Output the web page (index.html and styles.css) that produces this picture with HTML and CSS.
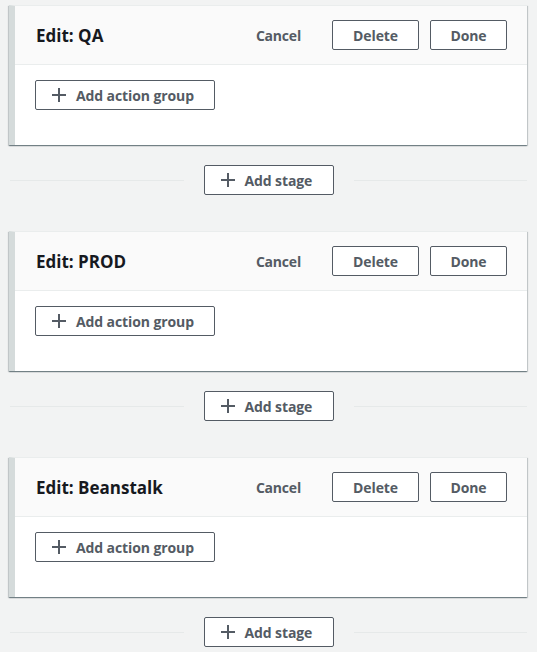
FILE: index.html
```html
<!DOCTYPE html>
<html>
<head>
<meta charset="utf-8">
<link rel="stylesheet" href="styles.css">
</head>
<body>
<div class="pipeline">
  <section class="stage">
    <header class="stage-head">
      <h2 class="stage-title">Edit: QA</h2>
      <div class="actions">
        <button class="link-btn">Cancel</button>
        <button class="btn btn-delete">Delete</button>
        <button class="btn btn-done">Done</button>
      </div>
    </header>
    <div class="stage-body">
      <button class="btn btn-icon btn-group"><svg class="plus" viewBox="0 0 14 14"><path d="M7 0v14M0 7h14"/></svg>Add action group</button>
    </div>
  </section>
  <div class="divider">
    <span class="line"></span>
    <button class="btn btn-icon btn-stage"><svg class="plus" viewBox="0 0 14 14"><path d="M7 0v14M0 7h14"/></svg>Add stage</button>
    <span class="line"></span>
  </div>

  <section class="stage">
    <header class="stage-head">
      <h2 class="stage-title">Edit: PROD</h2>
      <div class="actions">
        <button class="link-btn">Cancel</button>
        <button class="btn btn-delete">Delete</button>
        <button class="btn btn-done">Done</button>
      </div>
    </header>
    <div class="stage-body">
      <button class="btn btn-icon btn-group"><svg class="plus" viewBox="0 0 14 14"><path d="M7 0v14M0 7h14"/></svg>Add action group</button>
    </div>
  </section>
  <div class="divider">
    <span class="line"></span>
    <button class="btn btn-icon btn-stage"><svg class="plus" viewBox="0 0 14 14"><path d="M7 0v14M0 7h14"/></svg>Add stage</button>
    <span class="line"></span>
  </div>

  <section class="stage">
    <header class="stage-head">
      <h2 class="stage-title">Edit: Beanstalk</h2>
      <div class="actions">
        <button class="link-btn">Cancel</button>
        <button class="btn btn-delete">Delete</button>
        <button class="btn btn-done">Done</button>
      </div>
    </header>
    <div class="stage-body">
      <button class="btn btn-icon btn-group"><svg class="plus" viewBox="0 0 14 14"><path d="M7 0v14M0 7h14"/></svg>Add action group</button>
    </div>
  </section>
  <div class="divider">
    <span class="line"></span>
    <button class="btn btn-icon btn-stage"><svg class="plus" viewBox="0 0 14 14"><path d="M7 0v14M0 7h14"/></svg>Add stage</button>
    <span class="line"></span>
  </div>
</div>
</body>
</html>
```
FILE: styles.css
```css
html, body {
  margin: 0;
  padding: 0;
  background: #f2f3f3;
  font-family: "Open Sans", "Noto Sans", Arial, sans-serif;
  color: #16191f;
}

.pipeline {
  padding: 5px 10px 0 9px;
}

.stage {
  width: 518px;
  box-sizing: border-box;
  background: #fff;
  border-left: 6px solid #d5dbdb;
  border-top: 1px solid #eaeded;
  box-shadow: 0 1px 1px 0 rgba(0, 28, 36, 0.35), 1px 1px 1px 0 rgba(0, 28, 36, 0.15), -1px 1px 1px 0 rgba(0, 28, 36, 0.15);
}

.stage-head {
  height: 59px;
  box-sizing: border-box;
  display: flex;
  align-items: center;
  justify-content: space-between;
  background: #fafafa;
  border-bottom: 1px solid #eaeded;
  padding: 0 20px 0 21px;
}

.stage-title {
  margin: 0;
  font-size: 17px;
  font-weight: 700;
  color: #16191f;
  letter-spacing: 0;
}

.actions {
  display: flex;
  align-items: center;
}

.link-btn {
  border: none;
  background: none;
  font-family: inherit;
  font-size: 14px;
  font-weight: 700;
  color: #545b64;
  padding: 0;
  margin-right: 31px;
  letter-spacing: -0.2px;
}

.btn {
  box-sizing: border-box;
  height: 30px;
  border: 1px solid #545b64;
  border-radius: 2px;
  background: #fff;
  font-family: inherit;
  font-size: 14px;
  font-weight: 700;
  color: #545b64;
  padding: 0;
  display: inline-flex;
  align-items: center;
  justify-content: center;
  letter-spacing: -0.1px;
}

.btn-delete {
  width: 87px;
  margin-right: 11px;
}

.btn-done {
  width: 77px;
}

.stage-body {
  padding: 15px 0 35px 20px;
}

.btn-icon {
  justify-content: flex-start;
}

.btn-group {
  width: 180px;
  padding-left: 16px;
}

.plus {
  width: 14px;
  height: 14px;
  margin-right: 10px;
  fill: none;
  stroke: #545b64;
  stroke-width: 2;
  flex: none;
}

.divider {
  display: flex;
  align-items: center;
  width: 517px;
  margin: 20px 0 36px 1px;
}

.line {
  flex: 1;
  height: 1px;
  background: #e6e9e9;
}

.btn-stage {
  width: 130px;
  padding-left: 16px;
  margin: 0 20px;
}
```
